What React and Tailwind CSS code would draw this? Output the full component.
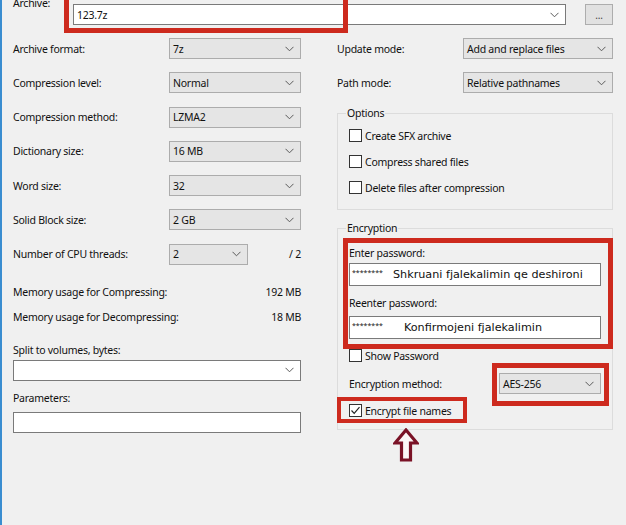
import React from "react";

const Chevron = () => (
  <svg width="9" height="6" viewBox="0 0 9 6" className="shrink-0">
    <path d="M0.5 0.8 L4.5 4.8 L8.5 0.8" fill="none" stroke="#5a5a5a" strokeWidth="1" />
  </svg>
);

const Select = ({ value, className = "" }) => (
  <div className={`flex h-[21px] items-center justify-between border border-[#acacac] bg-[#e5e5e5] pl-[3px] pr-[6px] ${className}`}>
    <span>{value}</span>
    <Chevron />
  </div>
);

const Combo = ({ value = "", className = "" }) => (
  <div className={`flex h-[21px] items-center justify-between border border-[#7a7a7a] bg-white pl-[3px] pr-[6px] ${className}`}>
    <span>{value}</span>
    <Chevron />
  </div>
);

const Check = ({ checked = false }) => (
  <div className="flex h-[13px] w-[13px] shrink-0 items-center justify-center border border-[#333] bg-white">
    {checked && (
      <svg width="11" height="11" viewBox="0 0 11 11">
        <path d="M1.5 5.5 L4.2 8.3 L9.5 2.2" fill="none" stroke="#222" strokeWidth="1.2" />
      </svg>
    )}
  </div>
);

const Row = ({ label, value }) => (
  <div className="flex h-[21px] items-center">
    <span className="flex-1">{label}</span>
    <Select value={value} className="w-[132px]" />
  </div>
);

const CheckRow = ({ label, checked }) => (
  <div className="flex h-[13px] items-center gap-[3px]">
    <Check checked={checked} />
    <span>{label}</span>
  </div>
);

export default function App() {
  return (
    <div className="relative flex h-[525px] w-[626px] overflow-hidden bg-[#f0f0f0] text-[10.5px] leading-[16px] tracking-[-0.25px] text-[#111] font-['Noto_Sans',sans-serif]">
      <div className="w-[2px] shrink-0 bg-[#3a8dd0]" />
      <div className="flex flex-1 flex-col pl-[11px] pr-[13px]">
        {/* Archive row */}
        <div className="flex items-start pt-[4px]">
          <span className="-mt-[9px] w-[60px]">Archive:</span>
          <Combo value="123.7z" className="w-[493px]" />
          <div className="ml-[19px] flex h-[21px] w-[28px] items-center justify-center border border-[#adadad] bg-[#e1e1e1] text-[10px] leading-none text-[#444]">
            ...
          </div>
        </div>

        <div className="mt-[13px] flex">
          {/* Left column */}
          <div className="flex w-[288px] flex-col">
            <div className="flex flex-col gap-[13.3px]">
              <Row label="Archive format:" value="7z" />
              <Row label="Compression level:" value="Normal" />
              <Row label="Compression method:" value="LZMA2" />
              <Row label="Dictionary size:" value="16 MB" />
              <Row label="Word size:" value="32" />
              <Row label="Solid Block size:" value="2 GB" />
              <div className="flex h-[21px] items-center">
                <span className="flex-1">Number of CPU threads:</span>
                <Select value="2" className="w-[79px]" />
                <span className="w-[53px] text-right">/ 2</span>
              </div>
            </div>
            <div className="mt-[19px] flex h-[16px] justify-between">
              <span>Memory usage for Compressing:</span>
              <span>192 MB</span>
            </div>
            <div className="mt-[9px] flex h-[16px] justify-between">
              <span>Memory usage for Decompressing:</span>
              <span>18 MB</span>
            </div>
            <div className="mt-[17px] h-[16px]">Split to volumes, bytes:</div>
            <Combo className="mt-[2px] w-full" />
            <div className="mt-[9px] h-[16px]">Parameters:</div>
            <div className="mt-[6px] h-[21px] w-full border border-[#7a7a7a] bg-white" />
          </div>

          {/* Right column */}
          <div className="ml-[36px] flex w-[276px] flex-col">
            <div className="flex h-[21px] items-center">
              <span className="flex-1">Update mode:</span>
              <Select value="Add and replace files" className="w-[150px]" />
            </div>
            <div className="mt-[13px] flex h-[21px] items-center">
              <span className="flex-1">Path mode:</span>
              <Select value="Relative pathnames" className="w-[150px]" />
            </div>

            <fieldset className="mt-[12px] flex flex-col gap-[13px] border border-[#dcdcdc] pb-[15px] pl-[11px] pt-[8px]">
              <legend className="-ml-[3px] px-[1px]">Options</legend>
              <CheckRow label="Create SFX archive" />
              <CheckRow label="Compress shared files" />
              <CheckRow label="Delete files after compression" />
            </fieldset>

            <fieldset className="mt-[10px] flex flex-col border border-[#dcdcdc] pb-[12px] pl-[11px] pr-[11px]">
              <legend className="-ml-[3px] px-[1px]">Encryption</legend>
              <div className="mt-[9px] h-[16px]">Enter password:</div>
              <div className="mt-[2px] flex h-[23px] items-center border border-[#7a7a7a] bg-white">
                <span className="-mt-[4px] ml-[2px] w-[28px] text-[7px] leading-none tracking-normal">********</span>
                <span className="ml-[13px] font-['DejaVu_Sans',sans-serif] text-[11.2px] tracking-normal">Shkruani fjalekalimin qe deshironi</span>
              </div>
              <div className="mt-[9px] h-[16px]">Reenter password:</div>
              <div className="mt-[5px] flex h-[23px] items-center border border-[#7a7a7a] bg-white">
                <span className="-mt-[4px] ml-[2px] w-[28px] text-[7px] leading-none tracking-normal">********</span>
                <span className="ml-[24px] font-['DejaVu_Sans',sans-serif] text-[11.2px] tracking-normal">Konfirmojeni fjalekalimin</span>
              </div>
              <div className="mt-[10px]">
                <CheckRow label="Show Password" />
              </div>
              <div className="mt-[11px] flex h-[21px] items-center">
                <span className="flex-1">Encryption method:</span>
                <Select value="AES-256" className="w-[102px]" />
              </div>
              <div className="mt-[10px]">
                <CheckRow label="Encrypt file names" checked />
              </div>
            </fieldset>
          </div>
        </div>
      </div>

      {/* Red annotation boxes */}
      <div className="pointer-events-none absolute left-[64px] top-[-5px] h-[38px] w-[284px] border-[5px] border-[#cd2a1e]" />
      <div className="pointer-events-none absolute left-[343px] top-[238px] h-[111px] w-[270px] border-[5px] border-[#cd2a1e]" />
      <div className="pointer-events-none absolute left-[492px] top-[363px] h-[43px] w-[117px] border-[5px] border-[#cd2a1e]" />
      <div className="pointer-events-none absolute left-[337px] top-[397px] h-[26px] w-[130px] border-[4px] border-[#cd2a1e]" />

      {/* Arrow */}
      <svg className="absolute left-[393px] top-[428px]" width="26" height="34" viewBox="0 0 26 34">
        <path d="M13 2 L24 15 L17.5 15 L17.5 32 L8.5 32 L8.5 15 L2 15 Z" fill="#fbf6f6" stroke="#7a1226" strokeWidth="3.2" strokeLinejoin="miter" />
      </svg>
    </div>
  );
}
